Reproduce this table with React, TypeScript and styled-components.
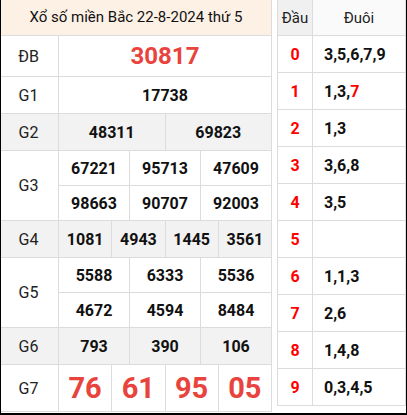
import React from "react";
import styled, { createGlobalStyle } from "styled-components";

const Global = createGlobalStyle`
  html, body { margin: 0; padding: 0; background: #fff; }
  body { font-family: Roboto, "Liberation Sans", Arial, sans-serif; color: #111; }
  * { box-sizing: border-box; }
`;

const LINE = "#dcdcdc";

const Frame = styled.div`
  width: 407px;
  height: 415px;
  border-left: 1px solid #000;
  border-right: 1px solid #000;
  border-bottom: 2px solid #000;
  display: flex;
  align-items: flex-start;
  gap: 5px;
  background: #fff;
`;

const LeftTable = styled.div`
  width: 271px;
  border-right: 1px solid ${LINE};
  display: flex;
  flex-direction: column;
`;

const Title = styled.div`
  height: 36px;
  background: #fdf0e5;
  border-bottom: 1px solid ${LINE};
  display: flex;
  align-items: center;
  justify-content: center;
  font-size: 15px;
  color: #111;
  padding-bottom: 1px;
`;

const Row = styled.div<{ $h: number; $grey?: boolean }>`
  height: ${(p) => p.$h}px;
  display: flex;
  border-bottom: 1px solid ${LINE};
  background: ${(p) => (p.$grey ? "#f2f2f2" : "#fff")};
`;

const Label = styled.div`
  width: 58px;
  flex: none;
  border-right: 1px solid ${LINE};
  display: flex;
  align-items: center;
  justify-content: center;
  font-size: 16px;
  color: #222;
  padding-right: 2px;
`;

const Values = styled.div`
  flex: 1;
  display: flex;
  flex-direction: column;
`;

const SubRow = styled.div`
  flex: 1;
  display: flex;
  & + & {
    border-top: 1px solid ${LINE};
  }
`;

const Cell = styled.div<{ $size?: number; $red?: boolean }>`
  flex: 1;
  display: flex;
  align-items: center;
  justify-content: center;
  font-weight: 700;
  font-size: ${(p) => p.$size ?? 16}px;
  color: ${(p) => (p.$red ? "#e8433c" : "#111")};
  & + & {
    border-left: 1px solid ${LINE};
  }
`;

const RightTable = styled.div`
  width: 129px;
  border-left: 1px solid ${LINE};
  border-right: 1px solid ${LINE};
  display: flex;
  flex-direction: column;
`;

const RRow = styled.div<{ $h: number }>`
  height: ${(p) => p.$h}px;
  display: flex;
  border-bottom: 1px solid ${LINE};
`;

const HeadCell = styled.div<{ $w?: number; $bg: string }>`
  ${(p) => (p.$w ? `width: ${p.$w}px; flex: none; border-right: 1px solid ${LINE};` : "flex: 1;")}
  background: ${(p) => p.$bg};
  display: flex;
  align-items: center;
  justify-content: center;
  font-size: 15px;
  color: #222;
`;

const Head = styled.div`
  width: 35px;
  flex: none;
  border-right: 1px solid ${LINE};
  display: flex;
  align-items: center;
  justify-content: center;
  font-weight: 700;
  font-size: 16px;
  color: #ff0000;
`;

const Tail = styled.div`
  flex: 1;
  display: flex;
  align-items: center;
  padding-left: 11px;
  font-weight: 700;
  font-size: 16px;
  color: #111;
`;

const Red = styled.span`
  color: #ff0000;
`;

type Prize = { label: string; h: number; grey?: boolean; rows: string[][]; size?: number; red?: boolean };

const prizes: Prize[] = [
  { label: "ĐB", h: 41, rows: [["30817"]], size: 24, red: true },
  { label: "G1", h: 37, rows: [["17738"]] },
  { label: "G2", h: 37, grey: true, rows: [["48311", "69823"]] },
  { label: "G3", h: 70, rows: [["67221", "95713", "47609"], ["98663", "90707", "92003"]] },
  { label: "G4", h: 37, grey: true, rows: [["1081", "4943", "1445", "3561"]] },
  { label: "G5", h: 70, rows: [["5588", "6333", "5536"], ["4672", "4594", "8484"]] },
  { label: "G6", h: 37, grey: true, rows: [["793", "390", "106"]] },
  { label: "G7", h: 47, rows: [["76", "61", "95", "05"]], size: 29, red: true },
];

const tails: { d: string; t: React.ReactNode }[] = [
  { d: "0", t: "3,5,6,7,9" },
  { d: "1", t: <>1,3,<Red>7</Red></> },
  { d: "2", t: "1,3" },
  { d: "3", t: "3,6,8" },
  { d: "4", t: "3,5" },
  { d: "5", t: "" },
  { d: "6", t: "1,1,3" },
  { d: "7", t: "2,6" },
  { d: "8", t: "1,4,8" },
  { d: "9", t: "0,3,4,5" },
];

export default function App() {
  return (
    <>
      <Global />
      <Frame>
        <LeftTable>
          <Title>Xổ số miền Bắc 22-8-2024 thứ 5</Title>
          {prizes.map((p) => (
            <Row key={p.label} $h={p.h} $grey={p.grey}>
              <Label>{p.label}</Label>
              <Values>
                {p.rows.map((r, i) => (
                  <SubRow key={i}>
                    {r.map((n, j) => (
                      <Cell key={j} $size={p.size} $red={p.red}>
                        {n}
                      </Cell>
                    ))}
                  </SubRow>
                ))}
              </Values>
            </Row>
          ))}
        </LeftTable>
        <RightTable>
          <RRow $h={36}>
            <HeadCell $w={35} $bg="#f0f0f0">Đầu</HeadCell>
            <HeadCell $bg="#fafafa">Đuôi</HeadCell>
          </RRow>
          {tails.map((r) => (
            <RRow key={r.d} $h={37}>
              <Head>{r.d}</Head>
              <Tail>{r.t}</Tail>
            </RRow>
          ))}
        </RightTable>
      </Frame>
    </>
  );
}
